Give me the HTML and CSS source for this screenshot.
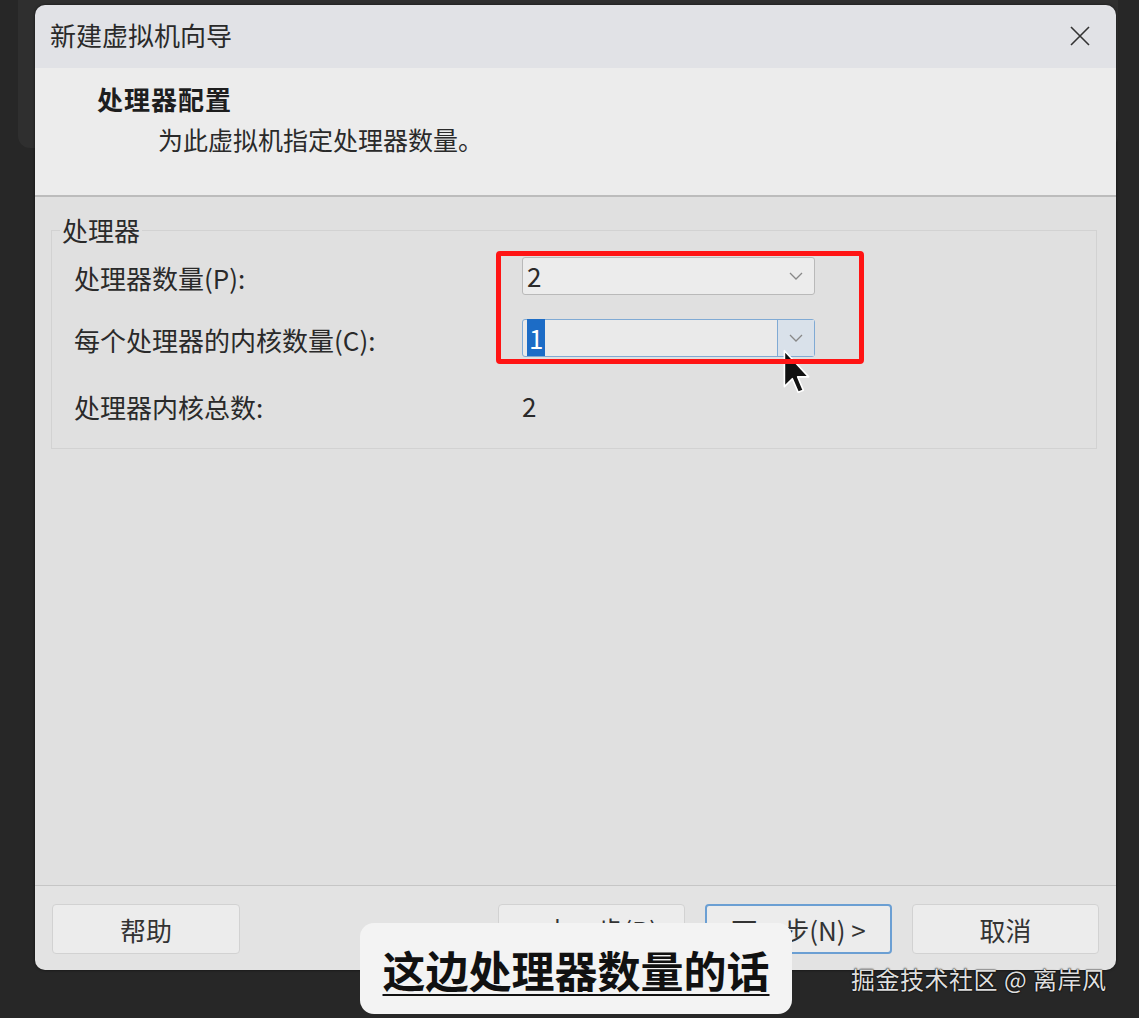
FILE: index.html
```html
<!DOCTYPE html>
<html>
    <head>
        <meta charset="utf-8">
        <title>新建虚拟机向导</title>
        <link rel="stylesheet" href="styles.css">
    </head>
    <body>
        <!-- 背后的窗口 -->
        <div class="behind"></div>

        <!-- 向导对话框 -->
        <div class="dialog">
            <div class="titlebar">
                <span>新建虚拟机向导</span>
                <svg class="close" width="20" height="20" viewBox="0 0 20 20">
                    <path d="M1 1 L19 19 M19 1 L1 19" stroke="#333" stroke-width="1.6" fill="none"/>
                </svg>
            </div>

            <!-- 页头 -->
            <div class="header">
                <div class="header-title">处理器配置</div>
                <div class="header-sub">为此虚拟机指定处理器数量。</div>
            </div>

            <!-- 内容 -->
            <div class="content">
                <fieldset class="group">
                    <legend>处理器</legend>
                    <div class="rows">
                        <div class="row">
                            <label>处理器数量(P):</label>
                            <div class="combo">
                                <span class="value">2</span>
                                <span class="arrow"><svg width="14" height="8" viewBox="0 0 14 8"><path d="M1 1 L7 7 L13 1" stroke="#888" stroke-width="1.3" fill="none"/></svg></span>
                            </div>
                        </div>
                        <div class="row">
                            <label>每个处理器的内核数量(C):</label>
                            <div class="combo focus">
                                <span class="value"><span class="sel">1</span></span>
                                <span class="arrow"><svg width="14" height="8" viewBox="0 0 14 8"><path d="M1 1 L7 7 L13 1" stroke="#888" stroke-width="1.3" fill="none"/></svg></span>
                            </div>
                        </div>
                        <div class="row total">
                            <label>处理器内核总数:</label>
                            <span class="value">2</span>
                        </div>
                    </div>
                </fieldset>

                <!-- 鼠标 -->
                <svg class="cursor" width="28" height="45" viewBox="0 0 12 19">
                    <path d="M0.6 0.6 V16 L4 12.6 L6.5 18.4 L8.7 17.5 L6.3 11.8 H11 Z" fill="#111" stroke="#fff" stroke-width="0.7" stroke-linejoin="round"/>
                </svg>
                <!-- 红框标注 -->
                <div class="mark"></div>
            </div>

            <!-- 底部按钮 -->
            <div class="footer">
                <div class="btn">帮助</div>
                <div class="btn-group">
                    <div class="btn">&lt; 上一步(B)</div>
                    <div class="btn default">下一步(N) &gt;</div>
                    <div class="btn">取消</div>
                </div>
            </div>
        </div>

        <!-- 字幕 -->
        <div class="caption"><span>这边处理器数量的话</span></div>
        <div class="watermark">掘金技术社区 @ 离岸风</div>
    </body>
</html>
```

FILE: styles.css
```css
*{
    margin: 0px;
    padding: 0px;
    box-sizing: border-box;
}
body{
    width: 1139px;
    height: 1018px;
    overflow: hidden;
    background-color: #272727;
    font-family: "Noto Sans CJK SC", "Liberation Sans", sans-serif;
    color: #262626;
    position: relative;
}

/* 背后的窗口 */
.behind{
    position: absolute;
    left: 18px;
    top: -20px;
    width: 1100px;
    height: 168px;
    background-color: #2f2f2f;
    border-radius: 12px;
}

/* 对话框 */
.dialog{
    position: relative;
    margin: 5px 0 0 35px;
    width: 1081px;
    height: 965px;
    border-radius: 10px;
    overflow: hidden;
    display: flex;
    flex-direction: column;
    box-shadow: 0 0 3px rgba(0,0,0,0.6);
}
.titlebar{
    height: 63px;
    flex: none;
    background-color: #e1e2e6;
    display: flex;
    align-items: center;
    justify-content: space-between;
    padding: 0 26px 5px 15px;
    font-size: 26px;
    color: #2a2a2a;
}
.titlebar .close{
    margin-top: 3px;
}

/* 页头 */
.header{
    height: 129px;
    flex: none;
    background-color: #ececec;
    border-bottom: 2px solid #bcbcbc;
    padding: 13px 0 0 62px;
}
.header-title{
    font-size: 26px;
    line-height: 36px;
    font-weight: bold;
    letter-spacing: 1px;
    color: #1e1e1e;
}
.header-sub{
    font-size: 25px;
    line-height: 36px;
    margin: 4px 0 0 61px;
    color: #2a2a2a;
}

/* 内容 */
.content{
    position: relative;
    flex: 1;
    background-color: #e0e0e0;
    padding: 19px 19px 0 16px;
}
.group{
    border: 1px solid #d2d2d2;
    padding: 0;
}
.group legend{
    font-size: 26px;
    line-height: 28px;
    margin-left: 8px;
    padding: 0 2px;
    color: #2a2a2a;
}
.rows{
    padding: 13px 22px 24px 22px;
    display: flex;
    flex-direction: column;
    gap: 24px;
}
.row{
    height: 38px;
    display: flex;
    align-items: center;
    font-size: 26px;
    color: #2a2a2a;
}
.row label{
    width: 448px;
    padding-top: 2px;
}
.row.total{
    margin-top: 5px;
}
.row .value{
    font-size: 26px;
}
.combo{
    width: 293px;
    height: 38px;
    border: 1px solid #b9b9b9;
    border-radius: 3px;
    background-color: #ececec;
    display: flex;
    align-items: center;
}
.combo .value{
    flex: 1;
    padding-left: 4px;
    line-height: 36px;
}
.combo .arrow{
    width: 37px;
    height: 100%;
    display: flex;
    align-items: center;
    justify-content: center;
}
.combo.focus{
    border-color: #80aad4;
    background-color: #eaeaea;
}
.combo.focus .arrow{
    border-left: 1px solid #80aad4;
    background-color: #d9e1ea;
}
.sel{
    background-color: #1c6cc6;
    color: #fff;
    padding: 0 2px;
}

/* 鼠标与红框 */
.cursor{
    position: absolute;
    left: 748px;
    top: 152px;
}
.mark{
    position: absolute;
    left: 461px;
    top: 54px;
    width: 368px;
    height: 113px;
    border: 5px solid #ff1414;
    border-radius: 4px;
}

/* 底部按钮 */
.footer{
    height: 85px;
    flex: none;
    background-color: #e3e3e3;
    border-top: 1px solid #c6c6c6;
    padding: 18px 17px 0 17px;
    display: flex;
    justify-content: space-between;
}
.btn-group{
    display: flex;
    gap: 20px;
}
.btn{
    width: 188px;
    height: 50px;
    border: 1px solid #d2d2d2;
    border-radius: 4px;
    background-color: #ececec;
    display: flex;
    align-items: center;
    justify-content: center;
    font-size: 26px;
    color: #333;
}
.btn-group .btn{
    width: 187px;
}
.btn.default{
    border: 2px solid #6b9fd3;
}

/* 字幕 */
.caption{
    position: absolute;
    left: 360px;
    top: 923px;
    width: 432px;
    height: 91px;
    background-color: #f3f3f3;
    border-radius: 14px;
    display: flex;
    align-items: center;
    justify-content: center;
}
.caption span{
    font-size: 43px;
    font-weight: bold;
    color: #111;
    line-height: 50px;
    text-decoration: underline;
    text-decoration-thickness: 2px;
    text-underline-offset: 6px;
}
.watermark{
    position: absolute;
    left: 851px;
    top: 961px;
    font-size: 24px;
    letter-spacing: 0.5px;
    color: #dedede;
    text-shadow: 0 0 2px #000, 0 0 1px #000;
}
```
